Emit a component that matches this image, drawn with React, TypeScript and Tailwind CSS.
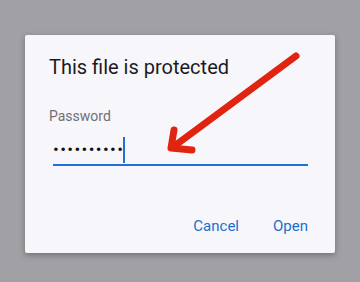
export default function App() {
  return (
    <div
      className="relative h-[282px] w-[360px] overflow-hidden bg-[#a1a1a5] pl-[25px] pt-[35px]"
      style={{ fontFamily: 'Roboto, "Liberation Sans", sans-serif' }}
    >
      <div className="flex h-[218px] w-[310px] flex-col rounded-[2px] bg-[#f7f7fb] pl-[24px] pr-[27px] pt-[20px] shadow-[0_2px_6px_rgba(0,0,0,0.3)]">
        <h2 className="text-[20px] leading-[24px] text-[#1c1c1e]">This file is protected</h2>

        <label className="mt-[27px] text-[14px] leading-[20px] text-[#6f6f73]">Password</label>

        <div className="ml-[4px] mt-[9px] flex h-[31px] items-center border-b-[2px] border-[#1f6fd8]">
          <span className="text-[17px] leading-none tracking-[1.4px] text-[#111]">••••••••••</span>
          <span className="-ml-[1px] h-[26px] w-[2px] bg-[#1f6fd8]" />
        </div>

        <div className="mt-auto mb-[17px] flex justify-end gap-[34px] text-[15px] leading-[20px] text-[#1a6fcd]">
          <button>Cancel</button>
          <button>Open</button>
        </div>
      </div>

      <svg className="pointer-events-none absolute left-0 top-0" width="360" height="282" viewBox="0 0 360 282">
        <g stroke="#e1240f" strokeWidth="7" strokeLinecap="round" strokeLinejoin="round" fill="none">
          <line x1="296" y1="56" x2="173" y2="147" />
          <polyline points="174,130 171,148 192,150" />
        </g>
      </svg>
    </div>
  );
}
